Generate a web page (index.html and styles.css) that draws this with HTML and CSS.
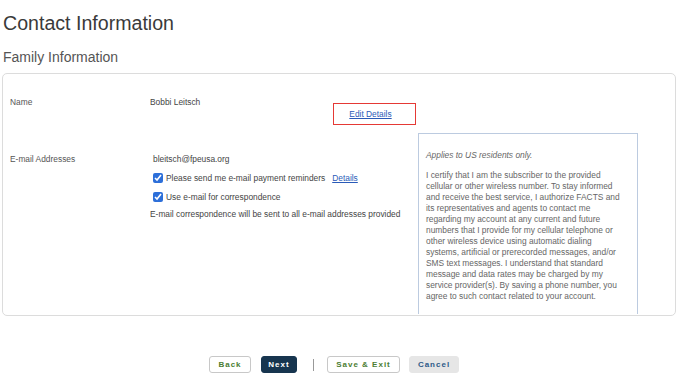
FILE: index.html
```html
<!DOCTYPE html>
<html lang="en">
<head>
    <meta charset="UTF-8">
    <meta name="viewport" content="width=device-width, initial-scale=1.0">
    <title>Contact Information</title>
    <link rel="stylesheet" href="styles.css">
</head>
<body>
    <h1 class="page-title">Contact Information</h1>
    <h2 class="section-title">Family Information</h2>

    <div class="card">
        <div class="row name-row">
            <div class="label">Name</div>
            <div class="value">Bobbi Leitsch</div>
            <div class="edit-box"><a href="#">Edit Details</a></div>
        </div>

        <div class="row email-row">
            <div class="label email-label">E-mail Addresses</div>
            <div class="email-col">
                <div class="email">bleitsch@fpeusa.org</div>
                <label class="check">
                    <input type="checkbox" checked>
                    <span>Please send me e-mail payment reminders</span>
                    <a href="#" class="details">Details</a>
                </label>
                <label class="check">
                    <input type="checkbox" checked>
                    <span>Use e-mail for correspondence</span>
                </label>
                <div class="note">E-mail correspondence will be sent to all e-mail addresses provided</div>
            </div>
            <div class="sms-box">
                <p class="applies">Applies to US residents only.</p>
                <p>I certify that I am the subscriber to the provided cellular or other wireless number. To stay informed and receive the best service, I authorize FACTS and its representatives and agents to contact me regarding my account at any current and future numbers that I provide for my cellular telephone or other wireless device using automatic dialing systems, artificial or prerecorded messages, and/or SMS text messages. I understand that standard message and data rates may be charged by my service provider(s). By saving a phone number, you agree to such contact related to your account.</p>
            </div>
        </div>
    </div>

    <div class="actions">
        <button class="btn btn-back">Back</button>
        <button class="btn btn-next">Next</button>
        <span class="divider"></span>
        <button class="btn btn-save">Save &amp; Exit</button>
        <button class="btn btn-cancel">Cancel</button>
    </div>
</body>
</html>
```

FILE: styles.css
```css
body {
    font-family: 'Liberation Sans', Arial, sans-serif;
    color: #444;
    background-color: #fff;
    margin: 0;
    padding: 0 2px;
}
.page-title {
    font-size: 19.6px;
    font-weight: normal;
    color: #3a3a3a;
    margin: 11px 0 0 1px;
    line-height: 24px;
}
.section-title {
    font-size: 14px;
    font-weight: normal;
    color: #555;
    margin: 13px 0 0 1px;
    line-height: 18px;
}
.card {
    margin-top: 7px;
    height: 241px;
    border: 1px solid #dcdcdc;
    border-radius: 5px;
    padding: 0 0 0 7px;
    font-size: 8.4px;
}
.row {
    display: flex;
}
.label {
    width: 140px;
    flex-shrink: 0;
    color: #555;
}
.name-row {
    padding-top: 23px;
    height: 36px;
}
.value {
    width: 183px;
}
.edit-box {
    margin-top: 6px;
    width: 83px;
    height: 22px;
    box-sizing: border-box;
    border: 1px solid #e53935;
    display: flex;
    align-items: center;
    justify-content: center;
    padding-right: 8px;
}
.edit-box a, .details {
    color: #2a5bb8;
}
.email-label {
    padding-top: 21px;
}
.email-col {
    width: 268px;
    padding-top: 21px;
}
.email {
    margin-left: 3px;
    margin-bottom: 8px;
}
.check {
    display: flex;
    align-items: center;
    gap: 3px;
    margin-left: 3px;
    height: 12px;
    margin-bottom: 7px;
}
.check input {
    width: 10px;
    height: 10px;
    margin: 0;
    accent-color: #2d6fd9;
}
.details {
    margin-left: 4px;
}
.note {
    margin-top: -1px;
}
.sms-box {
    width: 196px;
    height: 164px;
    border: 1px solid #bccbe0;
    border-bottom: none;
    padding: 16px 15px 0 7px;
    color: #666;
    line-height: 11px;
}
.sms-box p {
    margin: 0 0 9px;
}
.applies {
    font-style: italic;
}
.actions {
    display: flex;
    align-items: center;
    margin: 40px 0 0 207px;
}
.btn {
    font-family: 'Liberation Sans', Arial, sans-serif;
    font-size: 8px;
    font-weight: bold;
    letter-spacing: 1px;
    height: 17px;
    border-radius: 3px;
    padding: 0;
    cursor: pointer;
}
.btn-back {
    width: 42px;
    background: #fff;
    border: 1px solid #c8c8c8;
    color: #4b7d32;
}
.btn-next {
    width: 36px;
    margin-left: 10px;
    background: #17354f;
    border: 1px solid #17354f;
    color: #fff;
}
.divider {
    width: 1px;
    height: 12px;
    background: #999;
    margin: 0 13px 0 16px;
}
.btn-save {
    width: 73px;
    background: #fff;
    border: 1px solid #c8c8c8;
    color: #4b7d32;
}
.btn-cancel {
    width: 50px;
    margin-left: 9px;
    background: #e6e6e6;
    border: 1px solid #e6e6e6;
    color: #2d5a88;
}
```
